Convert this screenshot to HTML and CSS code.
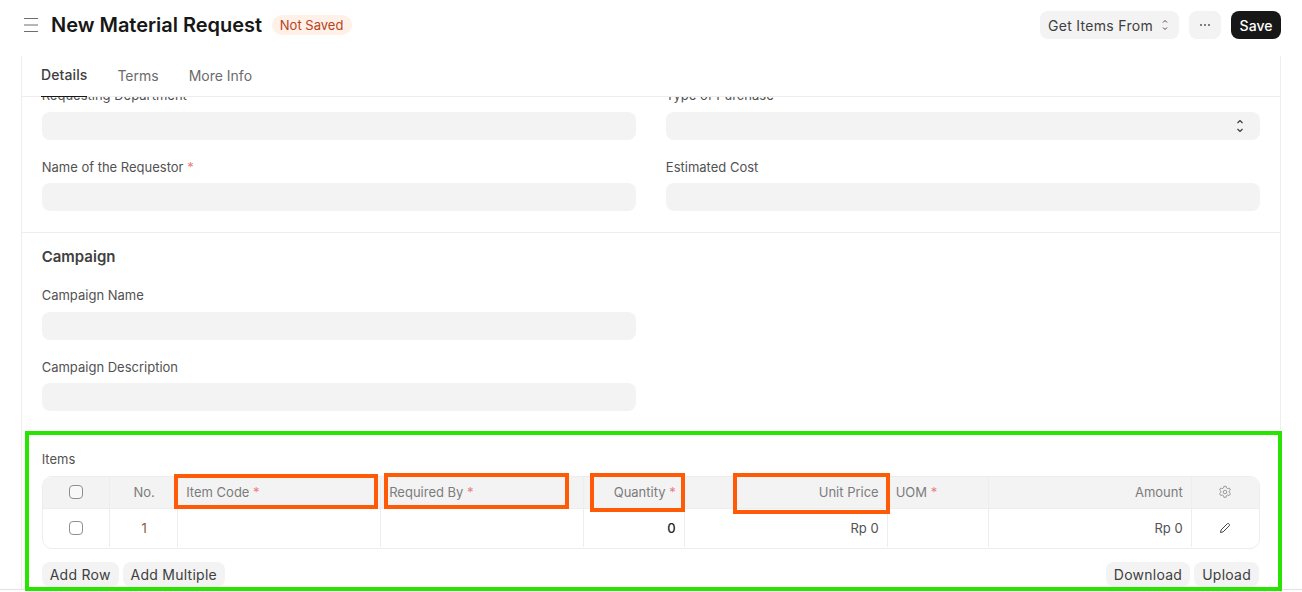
FILE: index.html
```html
<!DOCTYPE html>
<html lang="en">
<head>
<meta charset="utf-8">
<title>New Material Request</title>
<link rel="stylesheet" href="styles.css">
</head>
<body>
<header class="page-head">
  <div class="title-group">
    <svg class="menu-icon" width="16" height="16" viewBox="0 0 16 16" fill="none" stroke="#6e6e6e" stroke-width="1.2"><path d="M1 1.500h14M1 8h14M1 14.500h14"/></svg>
    <h1 class="title">New Material Request</h1>
    <span class="badge">Not Saved</span>
  </div>
  <div class="actions">
    <button class="btn btn-get">Get Items From
      <svg width="8" height="12" viewBox="0 0 8 12" fill="none" stroke="#4a4a4a" stroke-width="1"><path d="M2 3.500 4 1.500 6 3.500M2 8.500 4 10.500 6 8.500"/></svg>
    </button>
    <button class="btn btn-more"><svg width="12" height="4" viewBox="0 0 12 4" fill="#4a4a4a"><circle cx="2" cy="2" r=".9"/><circle cx="6" cy="2" r=".9"/><circle cx="10" cy="2" r=".9"/></svg></button>
    <button class="btn btn-save">Save</button>
  </div>
</header>
<main class="card">
  <nav class="tabs">
    <span class="tab tab-active">Details</span>
    <span class="tab">Terms</span>
    <span class="tab">More Info</span>
  </nav>
  <div class="scroller">
    <section class="section section-first">
      <div class="form-row">
        <div class="field"><label class="label label-top">Requesting Department</label><div class="input"></div></div>
        <div class="field"><label class="label label-top">Type of Purchase</label>
          <div class="input input-select">
            <svg width="10" height="14" viewBox="0 0 10 14" fill="none" stroke="#333" stroke-width="1.100"><path d="M2.500 4 5 1.500 7.500 4M2.500 10 5 12.500 7.500 10"/></svg>
          </div>
        </div>
      </div>
      <div class="form-row">
        <div class="field"><label class="label">Name of the Requestor <span class="req">*</span></label><div class="input"></div></div>
        <div class="field"><label class="label">Estimated Cost</label><div class="input"></div></div>
      </div>
    </section>
    <section class="section section-campaign">
      <h2 class="section-title">Campaign</h2>
      <div class="form-row">
        <div class="field"><label class="label label-top">Campaign Name</label><div class="input"></div></div>
        <div class="field"></div>
      </div>
      <div class="form-row">
        <div class="field"><label class="label">Campaign Description</label><div class="input"></div></div>
        <div class="field"></div>
      </div>
    </section>
    <section class="section section-items">
      <label class="label label-top">Items</label>
      <div class="grid">
        <div class="grid-row grid-head">
          <div class="cell"><span class="check"></span></div>
          <div class="cell cell-no">No.</div>
          <div class="cell cell-left">Item Code&nbsp;<span class="req">*</span></div>
          <div class="cell cell-left">Required By&nbsp;<span class="req">*</span></div>
          <div class="cell cell-right">Quantity&nbsp;<span class="req">*</span></div>
          <div class="cell cell-right">Unit Price</div>
          <div class="cell">UOM&nbsp;<span class="req">*</span></div>
          <div class="cell cell-right">Amount</div>
          <div class="cell cell-center">
            <svg width="14" height="14" viewBox="0 0 16 16" fill="none" stroke="#8f8f8f" stroke-width="1"><path d="M6.700 1.500h2.600l.4 1.900 1.300.7 1.900-.6 1.300 2.200-1.500 1.300v1.500l1.500 1.300-1.300 2.200-1.900-.6-1.300.7-.4 1.900H6.700l-.4-1.900-1.300-.7-1.900.6-1.300-2.200 1.500-1.300V7L1.800 5.700l1.300-2.200 1.900.6 1.300-.7z"/><circle cx="8" cy="8" r="2"/></svg>
          </div>
        </div>
        <div class="grid-row grid-body">
          <div class="cell"><span class="check"></span></div>
          <div class="cell cell-no cell-index">1</div>
          <div class="cell"></div>
          <div class="cell"></div>
          <div class="cell cell-right cell-strong">0</div>
          <div class="cell cell-right">Rp 0</div>
          <div class="cell"></div>
          <div class="cell cell-right">Rp 0</div>
          <div class="cell cell-center">
            <svg width="12" height="12" viewBox="0 0 12 12" fill="none" stroke="#444" stroke-width="1"><path d="M1.500 10.500l.6-2.600L8.300 1.700a1 1 0 0 1 1.400 0l.6.6a1 1 0 0 1 0 1.400L4.100 9.900z"/></svg>
          </div>
        </div>
      </div>
      <div class="grid-actions">
        <div class="btn-group">
          <button class="btn btn-small">Add Row</button>
          <button class="btn btn-small">Add Multiple</button>
        </div>
        <div class="btn-group">
          <button class="btn btn-small">Download</button>
          <button class="btn btn-small">Upload</button>
        </div>
      </div>
    </section>
  </div>
</main>
<div class="mark mark-green"></div>
<div class="mark mark-orange mark-code"></div>
<div class="mark mark-orange mark-date"></div>
<div class="mark mark-orange mark-qty"></div>
<div class="mark mark-orange mark-price"></div>
</body>
</html>
```
FILE: styles.css
```css
* { box-sizing: border-box; }
html, body { margin: 0; height: 592px; overflow: hidden; background: #fff; }
body { position: relative; font-family: Inter, "Liberation Sans", sans-serif; font-size: 13px; color: #525252; }
.page-head { height: 56px; padding: 11px 21px 0 23px; display: flex; justify-content: space-between; align-items: flex-start; }
.title-group { display: flex; align-items: center; height: 28px; }
.menu-icon { margin-right: 12px; }
.title { margin: 0 9.500px 0 0; font-size: 20px; font-weight: 600; color: #171717; line-height: 28px; letter-spacing: -.02px; }
.badge { width: 80px; height: 20px; text-align: center; border-radius: 10px; background: #fff0e8; color: #b8431b; font-size: 13px; line-height: 20px; }
.actions { display: flex; align-items: center; gap: 10px; }
.btn { border: 0; margin: 0; font: inherit; border-radius: 8px; background: #f3f3f3; color: #404040; display: inline-flex; align-items: center; justify-content: center; }
.btn-get { width: 139px; height: 28px; gap: 8px; padding: 0 0 0 8px; justify-content: flex-start; font-size: 14px; letter-spacing: .3px; }
.btn-more { width: 32px; height: 28px; }
.btn-save { width: 50px; height: 28px; background: #171717; color: #fff; font-size: 14px; font-weight: 500; }
.card { margin: 0 21px; height: 533px; border: solid #ededed; border-width: 0 1px; display: flex; flex-direction: column; }
.tabs { height: 41px; flex: none; display: flex; gap: 30px; padding-left: 19px; border-bottom: 1px solid #ededed; }
.tab { height: 41px; line-height: 40px; font-size: 14px; color: #6b6b6b; }
.tab-active { color: #404040; font-weight: 500; border-bottom: 1px solid #171717; line-height: 38px; letter-spacing: .1px; }
.scroller { flex: 1; overflow: hidden; }
.section { padding: 0 20px 0 19.700px; }
.section-first { margin-top: -10px; height: 146px; border-bottom: 1px solid #ededed; }
.section-campaign { height: 194px; padding-top: 13px; }
.section-title { margin: 0 0 19px; font-size: 15px; font-weight: 600; line-height: 22px; color: #404040; }
.form-row { display: flex; gap: 30px; margin-bottom: 19px; }
.field { flex: 1; min-width: 0; }
.label { display: block; height: 16px; margin-bottom: 8px; font-size: 13px; line-height: 16px; color: #525252; }
.label-top { margin-bottom: 9px; }
.req { color: #e98080; }
.input { height: 28px; background: #f3f3f3; border-radius: 8px; }
.input-select { display: flex; align-items: center; justify-content: flex-end; padding-right: 15px; }
.section-items { padding-top: 24px; }
.grid { border: 1px solid #ededed; border-radius: 10px; overflow: hidden; }
.grid-row { display: grid; grid-template-columns: 67px 68px 203px 203px 101px 203px 101px 203px 1fr; }
.grid-head { height: 32px; background: #f3f3f3; border-bottom: 1px solid #ededed; color: #7c7c7c; }
.grid-body { height: 39px; color: #525252; }
.cell { border-right: 1px solid #ededed; padding: 0 8px; display: flex; align-items: center; justify-content: flex-start; white-space: nowrap; height: 100%; }
.grid-head .cell { padding-bottom: 1px; }
.cell:first-child { justify-content: center; padding-left: 0; padding-right: 0; }
.cell:last-child { border-right: 0; }
.grid-body .cell { height: 38px; }
.cell.cell-left { padding-left: 8.500px; }
.cell-right { justify-content: flex-end; }
.cell.cell-center { justify-content: center; padding-left: 0; padding-right: 1px; }
.cell.cell-no { justify-content: center; padding-left: 10px; }
.cell-index { color: #8a5a3a; }
.cell-strong { color: #262626; font-weight: 500; }
.check { width: 14px; height: 14px; border: 1px solid #8f8f8f; border-radius: 4px; background: #fff; }
.grid-head .check { background: #f8f8f8; }
.grid-actions { display: flex; justify-content: space-between; margin-top: 13px; padding-right: 1px; }
.btn-group { display: flex; gap: 4px; }
.btn-small { height: 25px; padding: 0 8px 1px; font-size: 14px; letter-spacing: .25px; }
body::after { content: ""; position: absolute; left: 0; right: 0; top: 589px; height: 1px; background: #e2e2e2; }
.mark { position: absolute; z-index: 1; }
.mark-green { left: 25px; top: 431px; width: 1257px; height: 160px; border: 4px solid #28e400; }
.mark-orange { border: 4px solid #ff5a06; }
.mark-code { left: 174px; top: 474px; width: 204px; height: 35px; }
.mark-date { left: 384px; top: 473px; width: 185px; height: 36px; }
.mark-qty { left: 590px; top: 473px; width: 95px; height: 39px; }
.mark-price { left: 733px; top: 473px; width: 157px; height: 41px; }
```
